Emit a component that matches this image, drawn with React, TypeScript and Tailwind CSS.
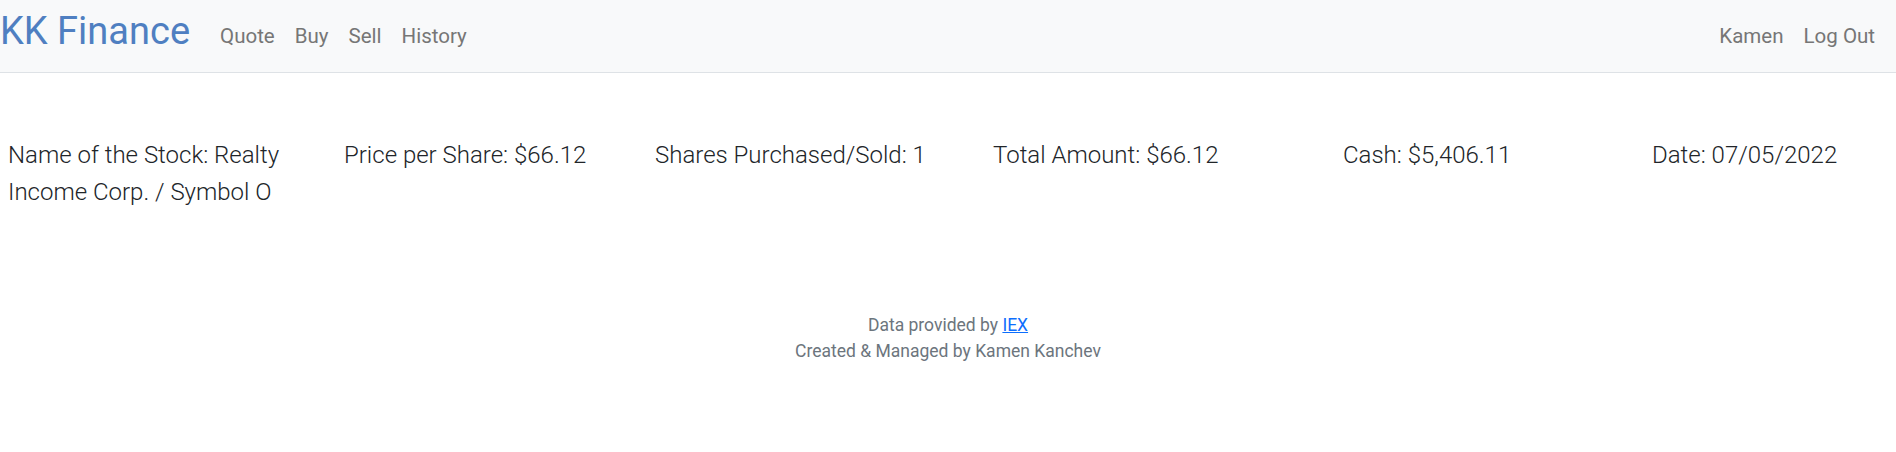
const font = { fontFamily: 'Roboto, "Open Sans", sans-serif' }

const navLinks = ['Quote', 'Buy', 'Sell', 'History']

const fields = [
  'Name of the Stock: Realty Income Corp. / Symbol O',
  'Price per Share: $66.12',
  'Shares Purchased/Sold: 1',
  'Total Amount: $66.12',
  'Cash: $5,406.11',
  'Date: 07/05/2022',
]

export default function App() {
  return (
    <div className="min-h-[452px] bg-white" style={font}>
      <nav className="flex h-[73px] items-center justify-between border-b border-[#dee2e6] bg-[#f8f9fa]">
        <div className="flex items-center">
          <a className="-mt-[10px] text-[38px] leading-none text-[#4f7fc1]">KK Finance</a>
          <ul className="ml-[30px] flex items-center gap-[20px] text-[20.5px] text-[#767676]">
            {navLinks.map((l) => (
              <li key={l}>{l}</li>
            ))}
          </ul>
        </div>
        <ul className="mr-[21px] flex items-center gap-[20px] text-[20.5px] text-[#767676]">
          <li>Kamen</li>
          <li>Log Out</li>
        </ul>
      </nav>

      <main className="grid grid-cols-[336px_311px_338px_350px_309px_1fr] pl-[8px] pt-[64px] text-[24px] font-light leading-[37px] text-[#212529]">
        {fields.map((f, i) => (
          <div key={f} className={i === 0 ? 'pr-[20px]' : ''}>
            {f}
          </div>
        ))}
      </main>

      <footer className="mt-[101px] text-center text-[17.5px] leading-[26px] text-[#6c757d]">
        <p>
          Data provided by{' '}
          <a className="text-[#0d6efd] underline">IEX</a>
        </p>
        <p>Created &amp; Managed by Kamen Kanchev</p>
      </footer>
    </div>
  )
}
